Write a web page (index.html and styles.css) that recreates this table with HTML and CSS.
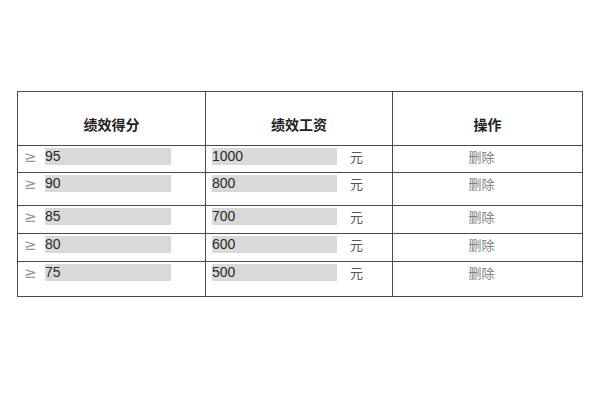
FILE: index.html
```html
<!DOCTYPE html>
<html lang="zh">
<head>
<meta charset="utf-8">
<link rel="stylesheet" href="styles.css">
</head>
<body>
<div class="page">
  <table class="grid">
    <colgroup><col class="c1"><col class="c2"><col class="c3"></colgroup>
    <thead>
      <tr class="head">
        <th>绩效得分</th>
        <th>绩效工资</th>
        <th>操作</th>
      </tr>
    </thead>
    <tbody>
      <tr class="r27">
        <td><div class="score"><span class="ge">≥</span><span class="field f1">95</span></div></td>
        <td><div class="pay"><span class="field f2">1000</span><span class="unit">元</span></div></td>
        <td><div class="op">删除</div></td>
      </tr>
      <tr class="r33">
        <td><div class="score"><span class="ge">≥</span><span class="field f1">90</span></div></td>
        <td><div class="pay"><span class="field f2">800</span><span class="unit">元</span></div></td>
        <td><div class="op">删除</div></td>
      </tr>
      <tr class="r28">
        <td><div class="score"><span class="ge">≥</span><span class="field f1">85</span></div></td>
        <td><div class="pay"><span class="field f2">700</span><span class="unit">元</span></div></td>
        <td><div class="op">删除</div></td>
      </tr>
      <tr class="r28">
        <td><div class="score"><span class="ge">≥</span><span class="field f1">80</span></div></td>
        <td><div class="pay"><span class="field f2">600</span><span class="unit">元</span></div></td>
        <td><div class="op">删除</div></td>
      </tr>
      <tr class="r35">
        <td><div class="score"><span class="ge">≥</span><span class="field f1">75</span></div></td>
        <td><div class="pay"><span class="field f2">500</span><span class="unit">元</span></div></td>
        <td><div class="op">删除</div></td>
      </tr>
    </tbody>
  </table>
</div>
</body>
</html>
```
FILE: styles.css
```css
html, body {
  margin: 0;
  background: #ffffff;
}
.page {
  width: 600px;
  height: 400px;
  padding: 91px 0 0 17px;
  box-sizing: border-box;
}
.grid {
  border-collapse: collapse;
  table-layout: fixed;
  width: 565px;
  font-family: "Liberation Sans", "Noto Sans CJK SC", sans-serif;
  color: #333;
}
.c1 { width: 188px; }
.c2 { width: 187px; }
.c3 { width: 190px; }
.grid th, .grid td {
  border: 1px solid #4a4a4a;
  padding: 0;
  box-sizing: border-box;
}
.grid th {
  height: 54px;
  font-family: "Noto Sans CJK SC", sans-serif;
  font-weight: 700;
  font-size: 14px;
  color: #222;
  text-align: center;
  vertical-align: middle;
  padding-top: 10px;
}
.grid td {
  vertical-align: top;
  padding-top: 2px;
}
.r27 td { height: 27px; }
.r33 td { height: 33px; }
.r28 td { height: 28px; }
.r35 td { height: 35px; }
.score, .pay {
  display: flex;
  align-items: center;
  height: 17px;
}
.score { padding-left: 6px; }
.pay { padding-left: 6px; }
.ge {
  width: 21px;
  font-family: "DejaVu Sans", sans-serif;
  font-size: 15px;
  color: #999;
}
.field {
  height: 17px;
  line-height: 17px;
  background: #d9d9d9;
  font-size: 14px;
  color: #2a2a2a;
  box-sizing: border-box;
}
.f1 { width: 126px; }
.f2 { width: 125px; }
.unit {
  margin-left: 13px;
  font-family: "Noto Sans CJK SC", sans-serif;
  font-size: 13px;
  color: #555;
}
.op {
  height: 17px;
  line-height: 17px;
  text-align: center;
  font-family: "Noto Sans CJK SC", sans-serif;
  font-size: 13px;
  color: #808080;
  padding-right: 12px;
}
```
